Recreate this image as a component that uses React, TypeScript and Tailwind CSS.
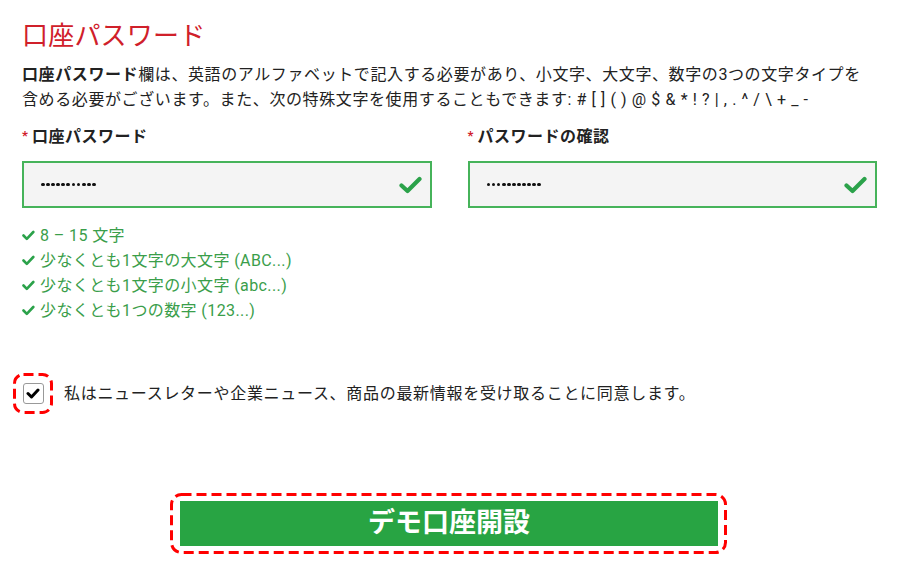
import React from "react";

const font = { fontFamily: 'Roboto, "Noto Sans CJK JP", sans-serif' };

function BigCheck() {
  return (
    <svg width="23" height="18" viewBox="0 0 23 18" className="shrink-0">
      <path d="M2.5 9.5 L8.5 15 L20.5 3" fill="none" stroke="#2ba24a" strokeWidth="4.2" strokeLinecap="round" strokeLinejoin="round" />
    </svg>
  );
}

function SmallCheck() {
  return (
    <svg width="13" height="11" viewBox="0 0 13 11" className="shrink-0">
      <path d="M1.5 5.5 L4.8 8.8 L11.3 2" fill="none" stroke="#2ba24a" strokeWidth="2.6" strokeLinecap="round" strokeLinejoin="round" />
    </svg>
  );
}

function DashedOutline({ w, h, r }: { w: number; h: number; r: number }) {
  return (
    <svg width={w} height={h} viewBox={`0 0 ${w} ${h}`} className="absolute left-0 top-0 pointer-events-none">
      <rect x="1.5" y="1.5" width={w - 3} height={h - 3} rx={r} fill="none" stroke="#ff0000" strokeWidth="3" strokeDasharray="10 5" />
    </svg>
  );
}

function Dots() {
  return (
    <div className="flex items-center gap-[1.3px]" aria-label="password">
      {Array.from({ length: 11 }).map((_, i) => (
        <span key={i} className="block w-[3.8px] h-[3.8px] rounded-full bg-[#111]" />
      ))}
    </div>
  );
}

function PasswordField({ label }: { label: string }) {
  return (
    <div className="flex flex-col">
      <div className="flex items-center h-[24px] text-[16px] font-bold text-[#222]">
        <span className="text-[#d0202a] text-[13px] mr-[4px] -mt-[3px]">*</span>
        <span className="tracking-[0.5px]">{label}</span>
      </div>
      <div className="mt-[12px] h-[47px] border-2 border-[#46b35a] bg-[#f4f4f4] flex items-center justify-between pl-[17px] pr-[8px]">
        <Dots />
        <BigCheck />
      </div>
    </div>
  );
}

export default function App() {
  const rules = [
    "8 – 15 文字",
    "少なくとも1文字の大文字 (ABC...)",
    "少なくとも1文字の小文字 (abc...)",
    "少なくとも1つの数字 (123...)",
  ];
  return (
    <div className="w-[900px] h-[587px] bg-white pl-[22px] pr-[23px] pt-[18px] overflow-hidden" style={font}>
      <h1 className="text-[26px] leading-[36px] text-[#d0202a] font-normal tracking-[0.2px]">口座パスワード</h1>
      <p className="mt-[8px] text-[16px] leading-[25px] text-[#222] tracking-[0.6px] whitespace-nowrap">
        <span className="font-bold">口座パスワード</span>欄は、英語のアルファベットで記入する必要があり、小文字、大文字、数字の3つの文字タイプを
        <br />
        含める必要がございます。また、次の特殊文字を使用することもできます: # [ ] ( ) @ $ &amp; * ! ? | , . ^ / \ + _ -
      </p>
      <div className="mt-[13px] grid grid-cols-2 gap-[36px]">
        <PasswordField label="口座パスワード" />
        <PasswordField label="パスワードの確認" />
      </div>
      <ul className="mt-[15px] flex flex-col">
        {rules.map((r) => (
          <li key={r} className="flex items-center h-[25px] text-[16px] text-[#3a9e4a] tracking-[0.4px]">
            <span className="w-[18px] flex items-center"><SmallCheck /></span>
            <span>{r}</span>
          </li>
        ))}
      </ul>
      <div className="mt-[50px] flex items-center">
        <div className="relative -ml-[9px] w-[40px] h-[41px] flex items-center justify-center">
          <DashedOutline w={40} h={41} r={9} />
          <div className="w-[21px] h-[21px] rounded-[3px] border border-[#999] bg-white flex items-center justify-center">
            <svg width="14" height="11" viewBox="0 0 14 11">
              <path d="M2 5.5 L5.5 9 L12 2" fill="none" stroke="#000" strokeWidth="3" strokeLinecap="round" strokeLinejoin="round" />
            </svg>
          </div>
        </div>
        <span className="ml-[11px] text-[16px] text-[#222] tracking-[0.7px]">私はニュースレターや企業ニュース、商品の最新情報を受け取ることに同意します。</span>
      </div>
      <div className="relative mt-[79px] ml-[148px] w-[557px] h-[61px] p-[8px] pl-[10px] pr-[9px]">
        <DashedOutline w={557} h={61} r={10} />
        <button className="w-full h-full bg-[#28a443] text-white text-[27px] font-bold flex items-center justify-center">
          デモ口座開設
        </button>
      </div>
    </div>
  );
}
